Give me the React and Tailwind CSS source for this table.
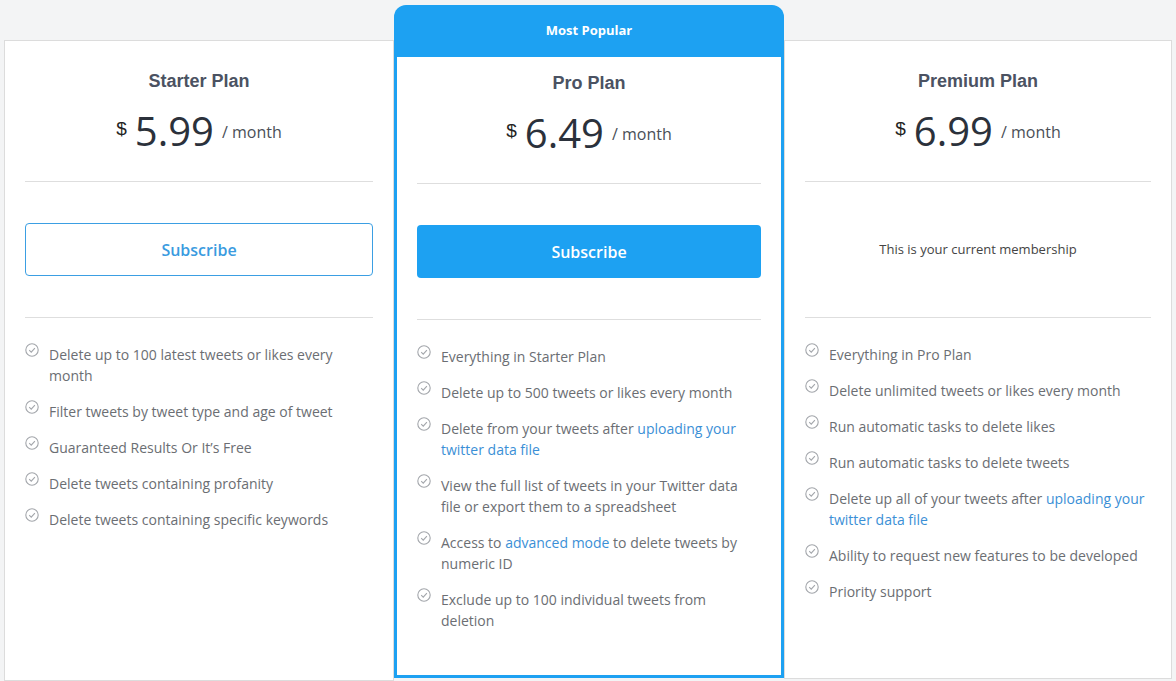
import { Fragment } from "react";

const plans = [
  {
    name: "Starter Plan",
    price: "5.99",
    action: "outline",
    features: [
      ["Delete up to 100 latest tweets or likes every month"],
      ["Filter tweets by tweet type and age of tweet"],
      ["Guaranteed Results Or It’s Free"],
      ["Delete tweets containing profanity"],
      ["Delete tweets containing specific keywords"],
    ],
  },
  {
    name: "Pro Plan",
    price: "6.49",
    action: "filled",
    features: [
      ["Everything in Starter Plan"],
      ["Delete up to 500 tweets or likes every month"],
      ["Delete from your tweets after ", { link: "uploading your twitter data file" }],
      ["View the full list of tweets in your Twitter data file or export them to a spreadsheet"],
      ["Access to ", { link: "advanced mode" }, " to delete tweets by numeric ID"],
      ["Exclude up to 100 individual tweets from deletion"],
    ],
  },
  {
    name: "Premium Plan",
    price: "6.99",
    action: "current",
    features: [
      ["Everything in Pro Plan"],
      ["Delete unlimited tweets or likes every month"],
      ["Run automatic tasks to delete likes"],
      ["Run automatic tasks to delete tweets"],
      ["Delete up all of your tweets after ", { link: "uploading your twitter data file" }],
      ["Ability to request new features to be developed"],
      ["Priority support"],
    ],
  },
];

function Check() {
  return (
    <svg width="14" height="14" viewBox="0 0 14 14" className="shrink-0 mt-[-1px]">
      <circle cx="7" cy="7" r="6.2" fill="none" stroke="#a3a6ab" strokeWidth="1.1" />
      <path d="M4.2 7.2 L6.2 9.1 L9.9 5.2" fill="none" stroke="#a3a6ab" strokeWidth="1.1" />
    </svg>
  );
}

function PlanBody({ plan }) {
  return (
    <>
      <h2 className="text-center text-[18px] leading-[24px] font-bold text-[#4b5262] font-['Liberation_Sans',Arial,sans-serif]">
        {plan.name}
      </h2>
      <div className="mt-[14px] flex items-center justify-center h-[48px]">
        <span className="text-[19px] font-['Liberation_Sans',Arial,sans-serif] text-[#222] self-start mt-[8px] mr-[8px]">$</span>
        <span className="text-[40px] leading-[48px] text-[#2b313b]">{plan.price}</span>
        <span className="text-[16px] text-[#4a4f57] ml-[8px] mt-[2px]">/ month</span>
      </div>
      <div className="mt-[26px] border-t border-[#dedede]" />
      <div className="h-[135px] py-[41px]">
        {plan.action === "outline" && (
          <button className="w-full h-[53px] rounded-[4px] border border-[#3b9fe3] text-[#3a9be0] text-[16px] font-semibold">
            Subscribe
          </button>
        )}
        {plan.action === "filled" && (
          <button className="w-full h-[53px] rounded-[4px] bg-[#1da1f2] text-white text-[16px] font-semibold">
            Subscribe
          </button>
        )}
        {plan.action === "current" && (
          <div className="h-[53px] flex items-center justify-center text-[13px] text-[#444]">
            This is your current membership
          </div>
        )}
      </div>
      <div className="border-t border-[#dedede]" />
      <ul className="mt-[26px] flex flex-col gap-[15px]">
        {plan.features.map((parts, i) => (
          <li key={i} className="flex gap-[10px] text-[14px] leading-[21px] text-[#6b6e73]">
            <Check />
            <p>
              {parts.map((p, j) =>
                typeof p === "string" ? (
                  <Fragment key={j}>{p}</Fragment>
                ) : (
                  <a key={j} className="text-[#3b8fd6]">{p.link}</a>
                )
              )}
            </p>
          </li>
        ))}
      </ul>
    </>
  );
}

export default function App() {
  return (
    <div className="w-[1176px] h-[681px] overflow-hidden bg-[#f3f4f5] font-['Open_Sans',sans-serif]">
      <div className="flex items-start pl-[4px]">
        <div className="mt-[40px] w-[390px] h-[641px] bg-white border border-[#dcdcdc] px-[20px] pt-[28px]">
          <PlanBody plan={plans[0]} />
        </div>
        <div className="mt-[5px] w-[390px]">
          <div className="h-[52px] rounded-t-[12px] bg-[#1da1f2] flex items-center justify-center text-white text-[13px] font-bold">
            Most Popular
          </div>
          <div className="h-[621px] bg-white border-x-[3px] border-b-[3px] border-[#1da1f2] px-[20px] pt-[14px]">
            <PlanBody plan={plans[1]} />
          </div>
        </div>
        <div className="mt-[40px] w-[388px] h-[639px] bg-white border border-[#dcdcdc] px-[20px] pt-[28px]">
          <PlanBody plan={plans[2]} />
        </div>
      </div>
    </div>
  );
}
